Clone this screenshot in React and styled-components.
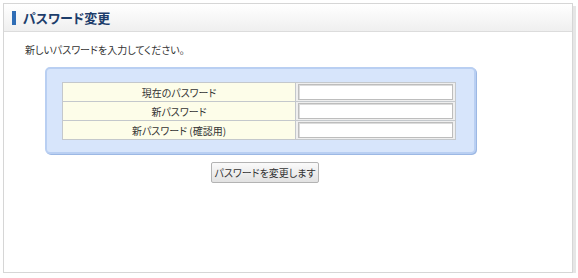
import React from "react";
import styled, { createGlobalStyle } from "styled-components";

const Global = createGlobalStyle`
  html, body { margin: 0; padding: 0; background: #fff; }
  body { font-family: "Noto Sans CJK JP", "Noto Sans", sans-serif; color: #333; }
`;

const Panel = styled.div`
  margin: 3px 0 0 3px;
  width: 568px;
  height: 268px;
  border: 1px solid #d6d6d6;
  background: #fff;
  box-shadow: 3px 3px 0 #e6e6e6;
`;

const Header = styled.div`
  height: 27px;
  display: flex;
  align-items: center;
  gap: 7px;
  padding-left: 8px;
  background: linear-gradient(#ffffff, #efefef);
  border-bottom: 1px solid #dcdcdc;
`;

const Bar = styled.span`
  width: 4px;
  height: 14px;
  background: #2f6db5;
`;

const Title = styled.h1`
  margin: 0;
  font-size: 13px;
  font-weight: bold;
  color: #1d3d6b;
  font-feature-settings: "palt";
`;

const Lead = styled.p`
  margin: 11px 0 0 21px;
  font-size: 10px;
  line-height: 14px;
  font-feature-settings: "palt";
`;

const Box = styled.div`
  box-sizing: border-box;
  margin: 10px 0 0 41px;
  width: 431px;
  padding: 13px 18px 12px 15px;
  border: 2px solid #b9cff2;
  border-radius: 5px;
  background: #d7e5fb;
  box-shadow: 1px 1px 0 #9cb8e4;
`;

const Table = styled.table`
  width: 394px;
  border-collapse: collapse;
`;

const Label = styled.td`
  width: 232px;
  height: 18px;
  padding: 0;
  border: 1px solid #c4c8cc;
  background: #fdfde9;
  text-align: center;
  font-size: 10px;
  font-feature-settings: "palt";
`;

const Field = styled.td`
  padding: 1px 2px;
  border: 1px solid #c4c8cc;
  background: #efefef;
`;

const Input = styled.input`
  display: block;
  box-sizing: border-box;
  width: 155px;
  height: 16px;
  margin: 0;
  padding: 0;
  border: 1px solid #bdbdbd;
  box-shadow: inset 1px 1px 0 #dcdcdc;
  background: #fff;
`;

const Actions = styled.div`
  display: flex;
  justify-content: center;
  width: 522px;
  margin-top: 8px;
`;

const Button = styled.button`
  height: 21px;
  width: 108px;
  padding: 0;
  border: 1px solid #b3b3b3;
  border-radius: 2px;
  background: linear-gradient(#fafafa, #e2e2e2);
  font-family: inherit;
  font-size: 10px;
  color: #333;
  font-feature-settings: "palt";
`;

const rows = ["現在のパスワード", "新パスワード", "新パスワード (確認用)"];

export default function App() {
  return (
    <>
      <Global />
      <Panel>
        <Header>
          <Bar />
          <Title>パスワード変更</Title>
        </Header>
        <Lead>新しいパスワードを入力してください。</Lead>
        <Box>
          <Table>
            <tbody>
              {rows.map((r) => (
                <tr key={r}>
                  <Label>{r}</Label>
                  <Field>
                    <Input type="password" />
                  </Field>
                </tr>
              ))}
            </tbody>
          </Table>
        </Box>
        <Actions>
          <Button>パスワードを変更します</Button>
        </Actions>
      </Panel>
    </>
  );
}
